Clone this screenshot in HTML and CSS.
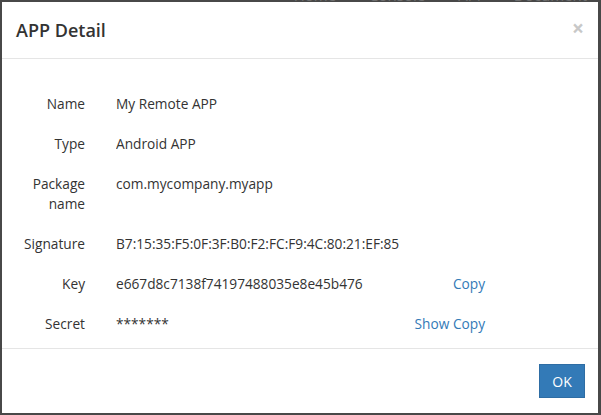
FILE: index.html
```html
<!DOCTYPE html>
<html>
<head>
<meta charset="utf-8">
<link rel="stylesheet" href="styles.css">
</head>
<body>
<nav class="topnav">
  <span class="nav-item">Home</span>
  <span class="nav-item">Console</span>
  <span class="nav-item">API</span>
  <span class="nav-item">Document</span>
</nav>
<div class="modal">
  <div class="modal-header">
    <h4 class="modal-title">APP Detail</h4>
    <span class="close">×</span>
  </div>
  <div class="modal-body">
    <div class="row">
      <div class="label">Name</div>
      <div class="value">My Remote APP</div>
      <div class="action"></div>
    </div>
    <div class="row">
      <div class="label">Type</div>
      <div class="value">Android APP</div>
      <div class="action"></div>
    </div>
    <div class="row">
      <div class="label">Package name</div>
      <div class="value">com.mycompany.myapp</div>
      <div class="action"></div>
    </div>
    <div class="row">
      <div class="label">Signature</div>
      <div class="value">B7:15:35:F5:0F:3F:B0:F2:FC:F9:4C:80:21:EF:85:3A:9D:1E:6B:42</div>
      <div class="action"></div>
    </div>
    <div class="row">
      <div class="label">Key</div>
      <div class="value">e667d8c7138f74197488035e8e45b476</div>
      <div class="action"><a class="link">Copy</a></div>
    </div>
    <div class="row">
      <div class="label">Secret</div>
      <div class="value">*******</div>
      <div class="action"><a class="link">Show</a> <a class="link">Copy</a></div>
    </div>
  </div>
  <div class="modal-footer">
    <button class="btn">OK</button>
  </div>
</div>
</body>
</html>
```
FILE: styles.css
```css
html, body {
  margin: 0;
  padding: 0;
}
body {
  background: #484848;
  font-family: "Open Sans", "Noto Sans", sans-serif;
  font-size: 13.7px;
  color: #333;
  width: 601px;
  height: 415px;
  overflow: hidden;
}
.topnav {
  height: 2px;
  overflow: hidden;
  display: flex;
  justify-content: flex-end;
  gap: 33px;
  padding-right: 14px;
}
.nav-item {
  color: #6e6e6e;
  font-size: 15px;
  line-height: 20px;
  margin-top: -15px;
}
.modal {
  background: #fff;
  width: 596px;
  margin-left: 2px;
  height: 411px;
  display: flex;
  flex-direction: column;
}
.modal-header {
  display: flex;
  align-items: center;
  justify-content: space-between;
  padding: 15px 14px 15px 14px;
  height: 26px;
  border-bottom: 1px solid #e5e5e5;
}
.modal-title {
  margin: 0;
  font-size: 18px;
  font-weight: 600;
  color: #333;
  line-height: 26px;
}
.close {
  font-size: 21px;
  font-weight: bold;
  color: #c8c8c8;
  line-height: 1;
  margin-top: -4px;
}
.modal-body {
  padding: 35px 15px 14px 15px;
  display: flex;
  flex-direction: column;
  gap: 20px;
}
.row {
  display: flex;
  line-height: 20px;
}
.label {
  width: 68px;
  margin-right: 31px;
  text-align: right;
}
.value {
  width: 284px;
  overflow: hidden;
  white-space: nowrap;
}
.action {
  width: 85px;
  text-align: right;
}
.link {
  color: #337ab7;
  text-decoration: none;
}
.modal-footer {
  border-top: 1px solid #e5e5e5;
  padding: 15px 13px 14px 15px;
  display: flex;
  justify-content: flex-end;
}
.btn {
  background: #337ab7;
  border: 1px solid #2e6da4;
  color: #fff;
  font-family: "Open Sans", "Noto Sans", sans-serif;
  font-size: 14px;
  width: 46px;
  height: 34px;
  border-radius: 0;
  padding: 0;
}
```
